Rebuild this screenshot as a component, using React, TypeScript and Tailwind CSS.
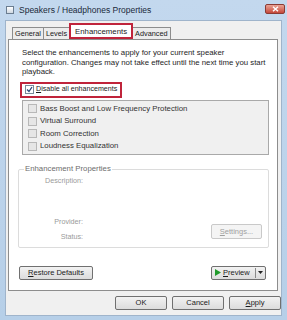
import React from "react";

const font = { fontFamily: '"Liberation Sans", Arial, sans-serif' };

const Box: React.FC<{ checked?: boolean; disabled?: boolean }> = ({ checked, disabled }) => (
  <span
    className={
      "inline-flex items-center justify-center w-[9px] h-[9px] shrink-0 border " +
      (disabled ? "border-[#b8b8b8] bg-[#e6e6e6]" : "border-[#7a8a99] bg-white")
    }
  >
    {checked && (
      <svg width="7" height="7" viewBox="0 0 7 7">
        <path d="M1 3.5 L3 5.5 L6 1" stroke="#2b4a7a" strokeWidth="1.3" fill="none" />
      </svg>
    )}
  </span>
);

const Btn: React.FC<{ children: React.ReactNode; className?: string; disabled?: boolean }> = ({
  children,
  className = "",
  disabled,
}) => (
  <div
    className={
      "flex items-center justify-center h-[14px] rounded-[2px] border text-[7.5px] whitespace-nowrap " +
      (disabled
        ? "border-[#c9c9c9] bg-[#f4f4f4] text-[#a0a0a0] "
        : "border-[#707070] bg-gradient-to-b from-[#f2f2f2] to-[#dcdcdc] text-[#1a1a1a] ") +
      className
    }
  >
    {children}
  </div>
);

const items = ["Bass Boost and Low Frequency Protection", "Virtual Surround", "Room Correction", "Loudness Equalization"];

export default function App() {
  return (
    <div className="w-[287px] h-[320px] flex flex-col bg-gradient-to-b from-[#c3d8ee] to-[#b6cfe8] px-[5px] pb-[4px] overflow-hidden" style={font}>
      {/* title bar */}
      <div className="h-[20px] flex items-center shrink-0">
        <div className="w-[8px] h-[8px] ml-[1px] border border-[#6b7d90] bg-gradient-to-b from-white to-[#cfd8e2]" />
        <span className="ml-[5px] text-[8.5px] text-[#1b2a3a]">Speakers / Headphones Properties</span>
        <div className="ml-auto mr-[-3px] mt-[-2px] w-[20px] h-[10px] rounded-[2px] border border-[#8a3b34] bg-gradient-to-b from-[#e9a396] to-[#c4463a] flex items-center justify-center">
          <svg width="7" height="6" viewBox="0 0 7 6">
            <path d="M1 0.8 L6 5.2 M6 0.8 L1 5.2" stroke="white" strokeWidth="1.4" />
          </svg>
        </div>
      </div>

      {/* content */}
      <div className="flex-1 flex flex-col bg-[#f0f0f0] border border-[#9fb4cb] text-[#1a1a1a]">
        {/* tabs */}
        <div className="flex items-end h-[17px] ml-[6px] mt-[1px]">
          <div className="h-[12px] px-[2px] border border-b-0 border-[#8d8d8d] bg-[#ececec] text-[7.3px] leading-[11px]">General</div>
          <div className="h-[12px] px-[2px] border border-b-0 border-l-0 border-[#8d8d8d] bg-[#ececec] text-[7.3px] leading-[11px]">Levels</div>
          <div className="relative h-[16px] w-[64px] border-2 border-[#c0243b] bg-white flex items-start justify-center -ml-[1px]">
            <span className="text-[7.8px] leading-[11px] mt-[1px]">Enhancements</span>
          </div>
          <div className="h-[12px] px-[2px] border border-b-0 border-l-0 border-[#8d8d8d] bg-[#ececec] text-[7.3px] leading-[11px]">Advanced</div>
        </div>

        {/* panel */}
        <div className="flex-1 mx-[2px] mr-[3px] border border-[#8d8d8d] bg-white flex flex-col pl-[13px] pr-[8px]">
          <p className="mt-[8px] w-[247px] text-[7.8px] leading-[9.5px] text-[#1e1e1e]">
            Select the enhancements to apply for your current speaker configuration. Changes may not take effect until the next time you start playback.
          </p>

          <div className="mt-[5px] -ml-[2px] w-[102px] h-[16px] border-2 border-[#c0243b] flex items-center pl-[3px] gap-[2px]">
            <Box checked />
            <span className="text-[7.1px] whitespace-nowrap">
              <u>D</u>isable all enhancements
            </span>
          </div>

          <div className="mt-[2px] h-[55px] border border-[#a9a9a9] bg-[#f0f0f0] flex flex-col pl-[5px] pt-[3px] gap-[2.5px]">
            {items.map((t) => (
              <div key={t} className="flex items-center gap-[3px] h-[10px]">
                <Box disabled />
                <span className="text-[7.8px] text-[#333]">{t}</span>
              </div>
            ))}
          </div>

          {/* group box */}
          <div className="relative mt-[14px] -ml-[4px] h-[79px] border border-[#dcdcdc] rounded-[2px] flex flex-col">
            <span className="absolute -top-[6px] left-[5px] bg-white px-[1px] text-[7.8px] leading-[10px] text-[#6d6d6d]">Enhancement Properties</span>
            <div className="mt-[6px] w-[64px] text-right text-[7.2px] text-[#9a9a9a]">Description:</div>
            <div className="mt-[31px] w-[64px] text-right text-[7.2px] text-[#9a9a9a]">Provider:</div>
            <div className="flex items-center mt-[4px]">
              <div className="w-[64px] text-right text-[7.2px] text-[#9a9a9a]">Status:</div>
              <Btn disabled className="ml-auto mr-[6px] -mt-[12px] w-[51px] h-[15px]">
                <u>S</u>ettings...
              </Btn>
            </div>
          </div>

          <div className="mt-[18px] flex items-center">
            <Btn className="-ml-[3px] w-[74px]">
              <u>R</u>estore Defaults
            </Btn>
            <Btn className="ml-auto mr-[3px] w-[55px] justify-start pl-[3px]">
              <svg width="6" height="7" viewBox="0 0 6 7">
                <path d="M0 0 L6 3.5 L0 7 Z" fill="#1f9a2a" />
              </svg>
              <span className="ml-[2px]">
                <u>P</u>review
              </span>
              <span className="ml-auto h-[10px] border-l border-[#8a8a8a]" />
              <svg className="mx-[2px]" width="5" height="3" viewBox="0 0 5 3">
                <path d="M0 0 L5 0 L2.5 3 Z" fill="#222" />
              </svg>
            </Btn>
          </div>
          <div className="h-[10px]" />
        </div>

        {/* bottom buttons */}
        <div className="h-[24px] flex items-center justify-end gap-[5px]">
          <Btn className="w-[52px] border-[#3c7fb1] from-[#eaf6fd] to-[#bee6fd]">OK</Btn>
          <Btn className="w-[52px]">Cancel</Btn>
          <Btn className="w-[52px]">
            <u>A</u>pply
          </Btn>
        </div>
      </div>
    </div>
  );
}
